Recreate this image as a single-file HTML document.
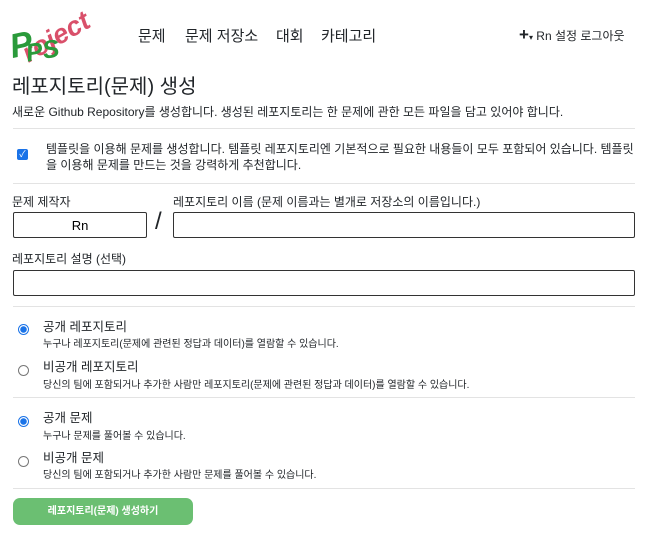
<!DOCTYPE html>
<html><head><meta charset="utf-8"><style>
body{margin:0;width:648px;height:537px;background:#fff;font-family:"Liberation Sans","Noto Sans CJK KR",sans-serif;color:#212529;position:relative;overflow:hidden}
.a{position:absolute;white-space:nowrap}
hr{position:absolute;left:13px;width:622px;border:0;border-top:1px solid #e3e3e3;margin:0}
input.t{position:absolute;height:26px;border:1px solid #333;border-radius:2px;box-sizing:border-box}
.rad{position:absolute;width:11px;height:11px;border-radius:50%;box-sizing:border-box;border:1px solid #777;left:18px}
.rad.on{border:1px solid #1a73e8;background:radial-gradient(circle,#1a73e8 0 3px,#fff 3.5px)}
.s{font-size:10px}
</style></head><body>
<span class="a" style="left:32px;top:38px;font:italic bold 27px 'Liberation Sans';color:#d9506a;transform:rotate(-30deg);transform-origin:left bottom">roject</span>
<span class="a" style="left:10px;top:26px;font:italic bold 34px 'Liberation Sans';color:#2a9a3a;transform:rotate(-12deg)">P</span>
<span class="a" style="left:26px;top:37px;font:italic bold 25px 'Liberation Sans';color:#2a9a3a;transform:rotate(-10deg)">PS</span>
<div class="a" style="left:138px;top:25px;font-size:15px">문제</div>
<div class="a" style="left:185px;top:25px;font-size:15px">문제 저장소</div>
<div class="a" style="left:276px;top:25px;font-size:15px">대회</div>
<div class="a" style="left:321px;top:25px;font-size:15px">카테고리</div>
<div class="a" style="left:519px;top:27px;font-size:12px"><b style="font-size:17px;line-height:12px">+</b><span style="font-size:8px">▾</span> Rn 설정 로그아웃</div>
<div class="a" style="left:12px;top:70px;font-size:20px">레포지토리(문제) 생성</div>
<div class="a" style="left:12px;top:103px;font-size:12px">새로운 Github Repository를 생성합니다. 생성된 레포지토리는 한 문제에 관한 모든 파일을 담고 있어야 합니다.</div>
<hr style="top:128px">
<div class="a" style="left:17px;top:149px;width:11px;height:11px;background:#1a73e8;border-radius:2px;color:#fff;font-size:9px;line-height:11px;text-align:center">✓</div>
<div class="a" style="left:46px;top:141px;font-size:12px;line-height:16px;white-space:normal;width:590px">템플릿을 이용해 문제를 생성합니다. 템플릿 레포지토리엔 기본적으로 필요한 내용들이 모두 포함되어 있습니다. 템플릿을 이용해 문제를 만드는 것을 강력하게 추천합니다.</div>
<hr style="top:183px">
<div class="a" style="left:12px;top:193px;font-size:12px">문제 제작자</div>
<div class="a" style="left:173px;top:193px;font-size:12px">레포지토리 이름 (문제 이름과는 별개로 저장소의 이름입니다.)</div>
<input class="t" style="left:13px;top:212px;width:134px;text-align:center;font-size:13px;font-family:inherit" value="Rn">
<div class="a" style="left:155px;top:208px;font-size:24px">/</div>
<input class="t" style="left:173px;top:212px;width:462px">
<div class="a" style="left:12px;top:250px;font-size:12px">레포지토리 설명 (선택)</div>
<input class="t" style="left:13px;top:270px;width:622px">
<hr style="top:306px">
<div class="rad on" style="top:324px"></div>
<div class="a" style="left:43px;top:316px;font-size:12.5px">공개 레포지토리</div>
<div class="a s" style="left:43px;top:335px">누구나 레포지토리(문제에 관련된 정답과 데이터)를 열람할 수 있습니다.</div>
<div class="rad" style="top:365px"></div>
<div class="a" style="left:43px;top:356px;font-size:12.5px">비공개 레포지토리</div>
<div class="a s" style="left:43px;top:376px">당신의 팀에 포함되거나 추가한 사람만 레포지토리(문제에 관련된 정답과 데이터)를 열람할 수 있습니다.</div>
<hr style="top:397px">
<div class="rad on" style="top:416px"></div>
<div class="a" style="left:43px;top:407px;font-size:12.5px">공개 문제</div>
<div class="a s" style="left:43px;top:427px">누구나 문제를 풀어볼 수 있습니다.</div>
<div class="rad" style="top:456px"></div>
<div class="a" style="left:43px;top:447px;font-size:12.5px">비공개 문제</div>
<div class="a s" style="left:43px;top:466px">당신의 팀에 포함되거나 추가한 사람만 문제를 풀어볼 수 있습니다.</div>
<hr style="top:488px">
<div class="a" style="left:13px;top:498px;width:180px;height:27px;background:#6bbf72;border-radius:7px;color:#fff;font-size:10px;font-weight:bold;line-height:27px;text-align:center">레포지토리(문제) 생성하기</div>
</body></html>
